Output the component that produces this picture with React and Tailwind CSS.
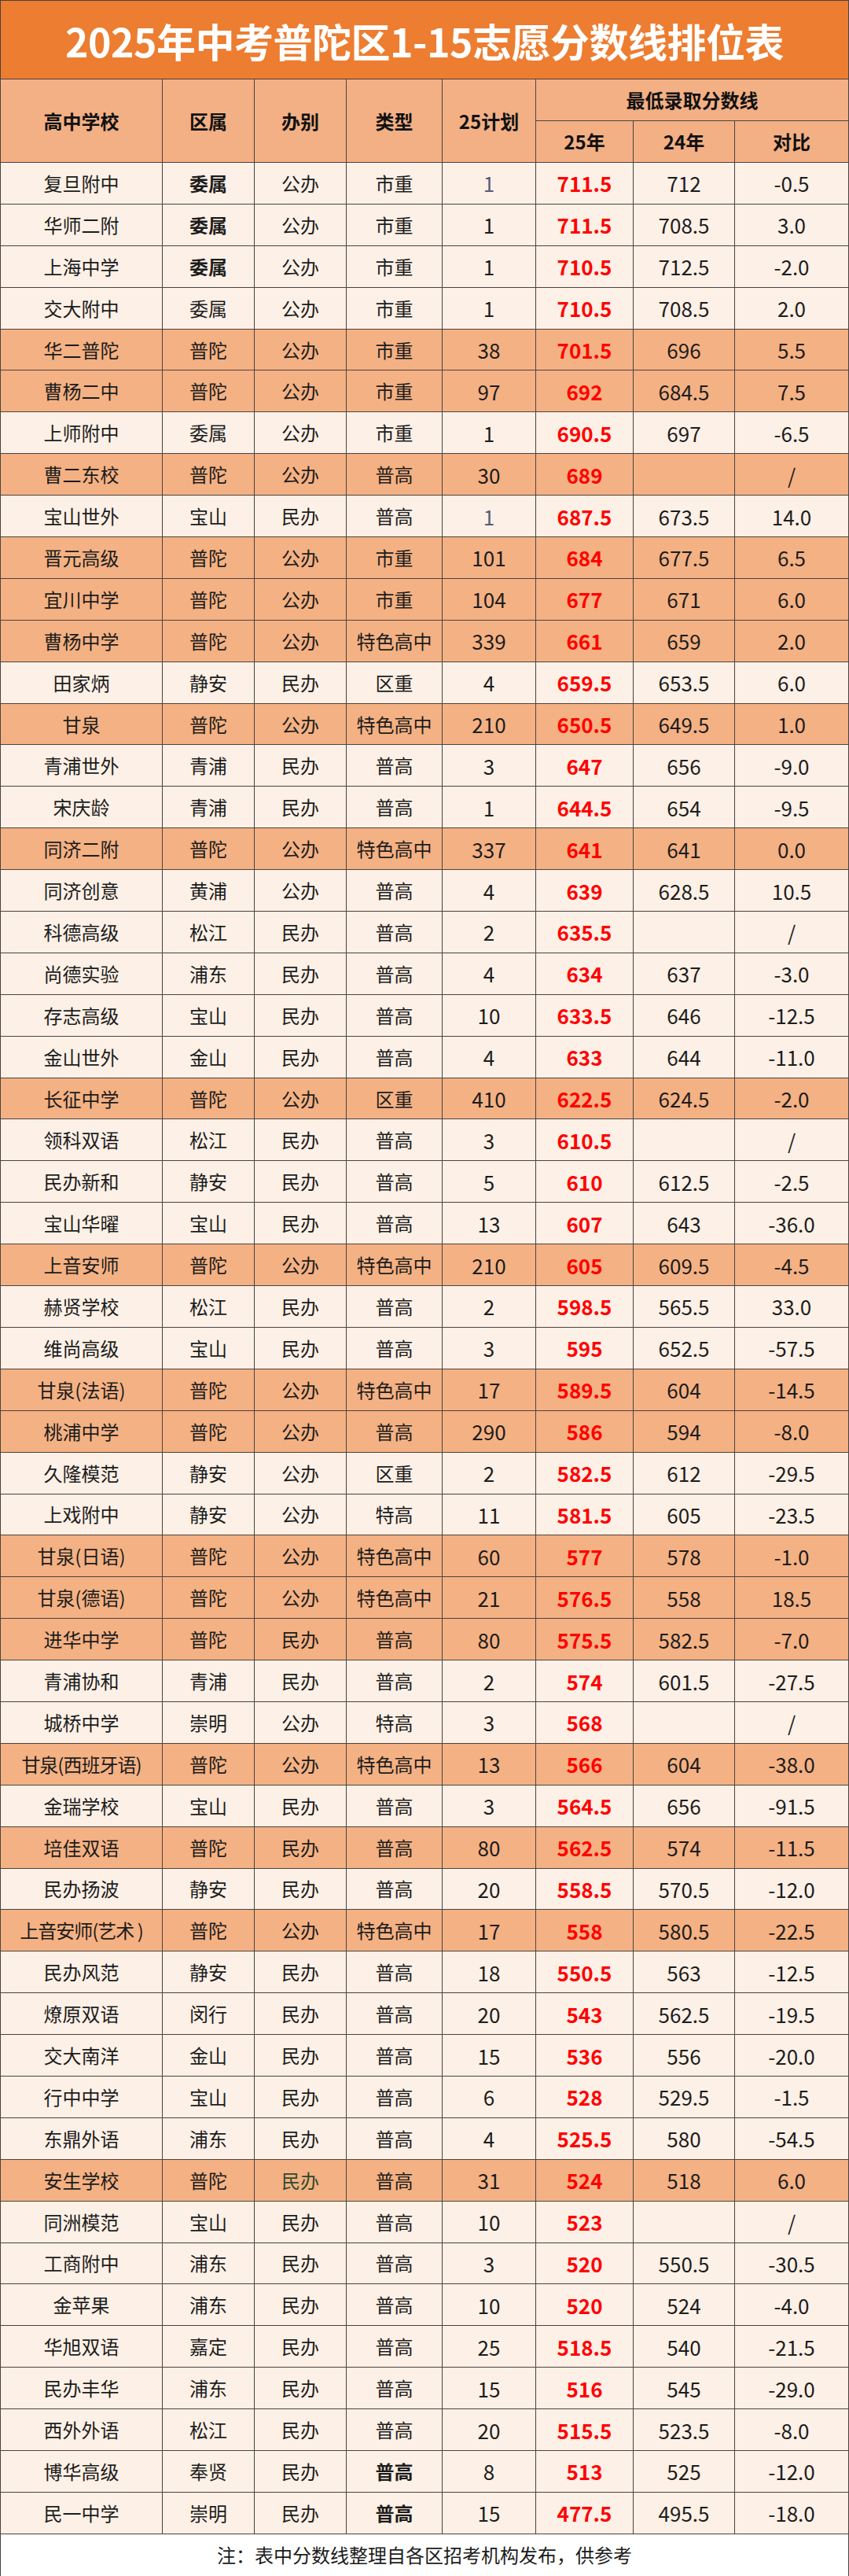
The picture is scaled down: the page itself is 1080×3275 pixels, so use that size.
//Ranking table of 2025 Putuo district zhongkao scores (1-15 choices).

const rows = [
    ["复旦附中", "委属", "公办", "市重", "1", "711.5", "712", "-0.5", 0, { dBold: true, planGray: true }],
    ["华师二附", "委属", "公办", "市重", "1", "711.5", "708.5", "3.0", 0, { dBold: true }],
    ["上海中学", "委属", "公办", "市重", "1", "710.5", "712.5", "-2.0", 0, { dBold: true }],
    ["交大附中", "委属", "公办", "市重", "1", "710.5", "708.5", "2.0", 0],
    ["华二普陀", "普陀", "公办", "市重", "38", "701.5", "696", "5.5", 1],
    ["曹杨二中", "普陀", "公办", "市重", "97", "692", "684.5", "7.5", 1],
    ["上师附中", "委属", "公办", "市重", "1", "690.5", "697", "-6.5", 0],
    ["曹二东校", "普陀", "公办", "普高", "30", "689", "", "/", 1],
    ["宝山世外", "宝山", "民办", "普高", "1", "687.5", "673.5", "14.0", 0, { planGray: true }],
    ["晋元高级", "普陀", "公办", "市重", "101", "684", "677.5", "6.5", 1],
    ["宜川中学", "普陀", "公办", "市重", "104", "677", "671", "6.0", 1],
    ["曹杨中学", "普陀", "公办", "特色高中", "339", "661", "659", "2.0", 1],
    ["田家炳", "静安", "民办", "区重", "4", "659.5", "653.5", "6.0", 0],
    ["甘泉", "普陀", "公办", "特色高中", "210", "650.5", "649.5", "1.0", 1],
    ["青浦世外", "青浦", "民办", "普高", "3", "647", "656", "-9.0", 0],
    ["宋庆龄", "青浦", "民办", "普高", "1", "644.5", "654", "-9.5", 0],
    ["同济二附", "普陀", "公办", "特色高中", "337", "641", "641", "0.0", 1],
    ["同济创意", "黄浦", "公办", "普高", "4", "639", "628.5", "10.5", 0],
    ["科德高级", "松江", "民办", "普高", "2", "635.5", "", "/", 0],
    ["尚德实验", "浦东", "民办", "普高", "4", "634", "637", "-3.0", 0],
    ["存志高级", "宝山", "民办", "普高", "10", "633.5", "646", "-12.5", 0],
    ["金山世外", "金山", "民办", "普高", "4", "633", "644", "-11.0", 0],
    ["长征中学", "普陀", "公办", "区重", "410", "622.5", "624.5", "-2.0", 1],
    ["领科双语", "松江", "民办", "普高", "3", "610.5", "", "/", 0],
    ["民办新和", "静安", "民办", "普高", "5", "610", "612.5", "-2.5", 0],
    ["宝山华曜", "宝山", "民办", "普高", "13", "607", "643", "-36.0", 0],
    ["上音安师", "普陀", "公办", "特色高中", "210", "605", "609.5", "-4.5", 1],
    ["赫贤学校", "松江", "民办", "普高", "2", "598.5", "565.5", "33.0", 0],
    ["维尚高级", "宝山", "民办", "普高", "3", "595", "652.5", "-57.5", 0],
    ["甘泉(法语)", "普陀", "公办", "特色高中", "17", "589.5", "604", "-14.5", 1],
    ["桃浦中学", "普陀", "公办", "普高", "290", "586", "594", "-8.0", 1],
    ["久隆模范", "静安", "公办", "区重", "2", "582.5", "612", "-29.5", 0],
    ["上戏附中", "静安", "公办", "特高", "11", "581.5", "605", "-23.5", 0],
    ["甘泉(日语)", "普陀", "公办", "特色高中", "60", "577", "578", "-1.0", 1],
    ["甘泉(德语)", "普陀", "公办", "特色高中", "21", "576.5", "558", "18.5", 1],
    ["进华中学", "普陀", "民办", "普高", "80", "575.5", "582.5", "-7.0", 1],
    ["青浦协和", "青浦", "民办", "普高", "2", "574", "601.5", "-27.5", 0],
    ["城桥中学", "崇明", "公办", "特高", "3", "568", "", "/", 0],
    ["甘泉(西班牙语)", "普陀", "公办", "特色高中", "13", "566", "604", "-38.0", 1],
    ["金瑞学校", "宝山", "民办", "普高", "3", "564.5", "656", "-91.5", 0],
    ["培佳双语", "普陀", "民办", "普高", "80", "562.5", "574", "-11.5", 1],
    ["民办扬波", "静安", "民办", "普高", "20", "558.5", "570.5", "-12.0", 0],
    ["上音安师(艺术 )", "普陀", "公办", "特色高中", "17", "558", "580.5", "-22.5", 1],
    ["民办风范", "静安", "民办", "普高", "18", "550.5", "563", "-12.5", 0],
    ["燎原双语", "闵行", "民办", "普高", "20", "543", "562.5", "-19.5", 0],
    ["交大南洋", "金山", "民办", "普高", "15", "536", "556", "-20.0", 0],
    ["行中中学", "宝山", "民办", "普高", "6", "528", "529.5", "-1.5", 0],
    ["东鼎外语", "浦东", "民办", "普高", "4", "525.5", "580", "-54.5", 0],
    ["安生学校", "普陀", "民办", "普高", "31", "524", "518", "6.0", 1, { typeGreen: true }],
    ["同洲模范", "宝山", "民办", "普高", "10", "523", "", "/", 0],
    ["工商附中", "浦东", "民办", "普高", "3", "520", "550.5", "-30.5", 0],
    ["金苹果", "浦东", "民办", "普高", "10", "520", "524", "-4.0", 0],
    ["华旭双语", "嘉定", "民办", "普高", "25", "518.5", "540", "-21.5", 0],
    ["民办丰华", "浦东", "民办", "普高", "15", "516", "545", "-29.0", 0],
    ["西外外语", "松江", "民办", "普高", "20", "515.5", "523.5", "-8.0", 0],
    ["博华高级", "奉贤", "民办", "普高", "8", "513", "525", "-12.0", 0, { kBold: true }],
    ["民一中学", "崇明", "民办", "普高", "15", "477.5", "495.5", "-18.0", 0, { kBold: true }],
]

const cols = "grid grid-cols-[207px_117px_117px_122px_119px_124px_129px_145px]"
const cell = "flex items-center justify-center border-r border-b border-[#4a4340] whitespace-nowrap"

const Row = ({ r }) => {
    const [name, dist, kind, type, plan, s25, s24, diff, hl, f = {}] = r
    const bg = hl ? "bg-[#F4B183]" : "bg-[#FDF0E6]"
    return (
        <div className={`${cols} h-[52.9px] ${bg} text-[#1c1c1c]`}>
            <div className={`${cell} border-l text-[24px] ${name.length > 6 ? "tracking-[-1px]" : ""}`}>{name}</div>
            <div className={`${cell} text-[24px] ${f.dBold ? "font-bold" : ""}`}>{dist}</div>
            <div className={`${cell} text-[24px] ${f.typeGreen ? "text-[#2e4a2e]" : ""}`}>{kind}</div>
            <div className={`${cell} text-[24px] ${f.kBold ? "font-bold" : ""}`}>{type}</div>
            <div className={`${cell} text-[26px] ${f.planGray ? "text-[#5a5a78]" : ""}`}>{plan}</div>
            <div className={`${cell} text-[26px] font-bold text-[#FF0000]`}>{s25}</div>
            <div className={`${cell} text-[26px]`}>{s24}</div>
            <div className={`${cell} text-[26px]`}>{diff}</div>
        </div>
    )
}

export default function App() {
    return (
        <div className="w-[1080px] bg-white" style={{ fontFamily: '"Noto Sans CJK SC", "Noto Sans", sans-serif' }}>
            {/*Title band */}
            <div className="h-[100px] bg-[#ED7D31] flex items-center justify-center border-x border-t border-[#4a4340]">
                <h1 className="text-white font-bold text-[50px] leading-none tracking-[-0.5px]">2025年中考普陀区1-15志愿分数线排位表</h1>
            </div>

            {/*Header, two levels */}
            <div className={`${cols} grid-rows-[53px_53px] bg-[#F3B084] text-[24px] font-bold text-[#111] border-t border-[#4a4340]`}>
                <div className={`${cell} border-l row-span-2`}>高中学校</div>
                <div className={`${cell} row-span-2`}>区属</div>
                <div className={`${cell} row-span-2`}>办别</div>
                <div className={`${cell} row-span-2`}>类型</div>
                <div className={`${cell} row-span-2`}>25计划</div>
                <div className={`${cell} col-span-3`}>最低录取分数线</div>
                <div className={cell}>25年</div>
                <div className={cell}>24年</div>
                <div className={cell}>对比</div>
            </div>

            {rows.map((r, i) => <Row key={i} r={r} />)}

            {/*Footnote */}
            <div className="h-[54px] flex items-center justify-center border-x border-b border-[#4a4340] text-[24px] text-[#1c1c1c]">
                注：表中分数线整理自各区招考机构发布，供参考
            </div>
        </div>
    )
}
